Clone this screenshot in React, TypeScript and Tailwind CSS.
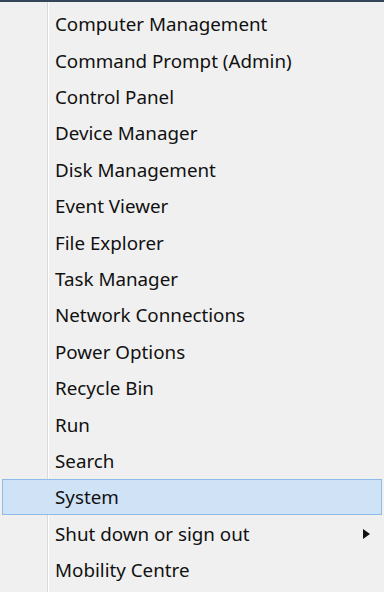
import React from "react";

const items = [
  "Computer Management",
  "Command Prompt (Admin)",
  "Control Panel",
  "Device Manager",
  "Disk Management",
  "Event Viewer",
  "File Explorer",
  "Task Manager",
  "Network Connections",
  "Power Options",
  "Recycle Bin",
  "Run",
  "Search",
  "System",
  "Shut down or sign out",
  "Mobility Centre",
];

export default function App() {
  return (
    <div className="w-[384px] h-[610px] bg-white" style={{ fontFamily: '"Noto Sans", "Open Sans", sans-serif' }}>
      <div className="h-[2px] bg-[#34445a]" />
      <div className="relative bg-[#f0f0f0] h-[590px] pt-[4px]">
        <div className="absolute left-[47px] top-0 bottom-0 w-[1px] bg-[#dadada]" />
        <div className="absolute left-[48px] top-0 bottom-0 w-[1px] bg-white" />
        {items.map((t, i) => {
          const hl = t === "System";
          return (
            <div
              key={t}
              className={
                "relative h-[36.4px] flex items-center mx-[2px] " +
                (hl ? "bg-[#cfe2f6] border border-[#8fbbe8] z-10" : "border border-transparent")
              }
            >
              <span className="pl-[52px] pt-[1px] text-[18.8px] text-[#111] leading-none">{t}</span>
              {t === "Shut down or sign out" && (
                <svg className="absolute left-[360px] top-[13px]" width="7" height="10" viewBox="0 0 7 10">
                  <path d="M0 0 L7 5 L0 10 Z" fill="#111" />
                </svg>
              )}
            </div>
          );
        })}
      </div>
    </div>
  );
}
